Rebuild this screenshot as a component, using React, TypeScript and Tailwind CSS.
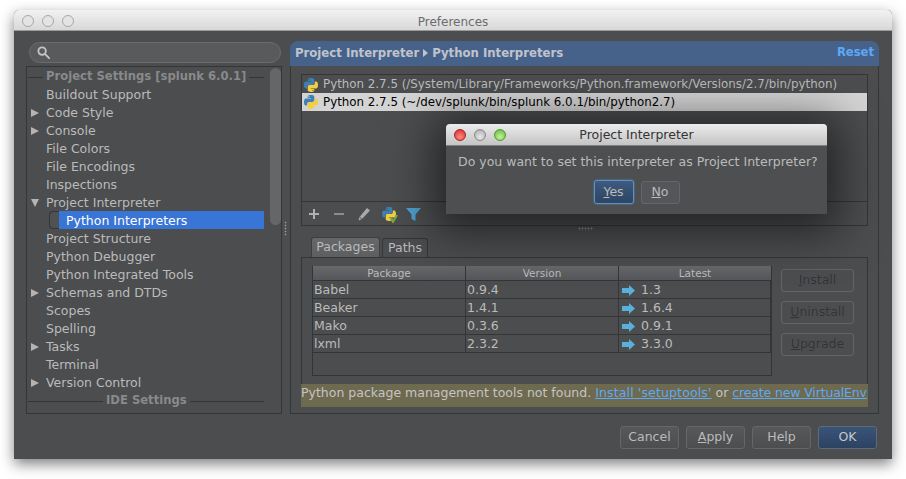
const treeItems: { label: string; arrow?: "right" | "down"; selected?: boolean }[] = [
  { label: "Buildout Support" },
  { label: "Code Style", arrow: "right" },
  { label: "Console", arrow: "right" },
  { label: "File Colors" },
  { label: "File Encodings" },
  { label: "Inspections" },
  { label: "Project Interpreter", arrow: "down" },
  { label: "Python Interpreters", selected: true },
  { label: "Project Structure" },
  { label: "Python Debugger" },
  { label: "Python Integrated Tools" },
  { label: "Schemas and DTDs", arrow: "right" },
  { label: "Scopes" },
  { label: "Spelling" },
  { label: "Tasks", arrow: "right" },
  { label: "Terminal" },
  { label: "Version Control", arrow: "right" },
];

const packages = [
  ["Babel", "0.9.4", "1.3"],
  ["Beaker", "1.4.1", "1.6.4"],
  ["Mako", "0.3.6", "0.9.1"],
  ["lxml", "2.3.2", "3.3.0"],
];

const PythonIcon = ({ className = "" }: { className?: string }) => (
  <svg viewBox="0 0 16 16" className={className}>
    <path
      fill="#3f7fb5"
      d="M7.9 1C4.6 1 4.7 2.5 4.7 2.5V4h3.4v.5H3.2S1 4.2 1 8s2 3.6 2 3.6h1.2V9.9s-.1-2 1.9-2h3.3s1.9 0 1.9-1.8V2.9S11.6 1 7.9 1zM6 2.1a.6.6 0 1 1 0 1.2.6.6 0 0 1 0-1.2z"
    />
    <path
      fill="#f2cf3e"
      d="M8.1 15c3.3 0 3.2-1.5 3.2-1.5V12H7.9v-.5h4.9S15 11.8 15 8s-2-3.6-2-3.6h-1.2v1.7s.1 2-1.9 2H6.6s-1.9 0-1.9 1.8v3.2S4.4 15 8.1 15zm1.9-1.1a.6.6 0 1 1 0-1.2.6.6 0 0 1 0 1.2z"
    />
  </svg>
);

const TrafficLight = ({ className }: { className: string }) => (
  <span className={`block h-3 w-3 rounded-full border ${className}`} />
);

const Grip = ({ className }: { className: string }) => (
  <span
    className={`absolute bg-[radial-gradient(circle,#9a9a9a_40%,transparent_50%)] bg-[length:3px_3px] ${className}`}
  />
);

const SectionHeader = ({ label, left }: { label: string; left: string }) => (
  <div className="flex h-[18px] items-center pl-px pr-[17px] pt-[2px] text-[11.6px] font-bold text-[#888a8c]">
    <span className={`h-px bg-[#333537] ${left}`} />
    <span className="px-[3px] whitespace-nowrap">{label}</span>
    <span className="h-px flex-1 bg-[#333537]" />
  </div>
);

const Sidebar = () => (
  <div className="flex w-[256px] flex-col">
    <div className="ml-[3px] mt-px flex h-[21px] w-[252px] items-center rounded-full border border-[#6a6c6e] bg-[#585a5c] pl-[7px]">
      <svg viewBox="0 0 14 14" className="h-[13px] w-[13px]" fill="none" stroke="#c4c4c4" strokeWidth="2">
        <circle cx="5.5" cy="5.5" r="4" />
        <path d="M8.5 8.5L13 13" strokeLinecap="round" />
      </svg>
    </div>
    <div className="relative mt-[3px] h-[348px] overflow-hidden border border-[#333537]">
      <SectionHeader label="Project Settings [splunk 6.0.1]" left="w-[15px]" />
      {treeItems.map((item) => (
        <div key={item.label} className={`flex h-[18px] items-center pr-[17px] ${item.selected ? "" : "pt-[2px]"}`}>
          <span className="flex w-[19px] shrink-0 justify-center pr-[4px]">
            {item.arrow === "right" && (
              <span className="h-0 w-0 border-y-[4.5px] border-l-[8px] border-y-transparent border-l-[#b4b4b4]" />
            )}
            {item.arrow === "down" && (
              <span className="h-0 w-0 border-x-[4.5px] border-t-[8px] border-x-transparent border-t-[#b4b4b4]" />
            )}
          </span>
          {item.selected ? (
            <>
              <span className="ml-[3px] h-[18px] w-[10px] rounded-l-sm border border-r-0 border-[#333537] bg-[#4f5153]" />
              <span className="flex h-[18px] flex-1 items-center bg-[#3875d7] pl-[7px] pt-[2px] text-white">
                {item.label}
              </span>
            </>
          ) : (
            <span className="whitespace-nowrap">{item.label}</span>
          )}
        </div>
      ))}
      <SectionHeader label="IDE Settings" left="w-[75px] ml-0" />
      <div className="flex h-[18px] items-center pl-[19px] pt-[2px]">Appearance</div>
      {/* scrollbar */}
      <span className="absolute left-[243px] top-px h-[157px] w-[11px] rounded-md bg-[#646668]" />
    </div>
  </div>
);

const ToolbarIcons = () => (
  <div className="flex h-[24px] items-center border-t border-[#333537] pl-[6px]">
    <svg viewBox="0 0 12 12" className="h-3 w-3" fill="none" stroke="#b0b0b0" strokeWidth="2">
      <path d="M6 1v10M1 6h10" />
    </svg>
    <svg viewBox="0 0 12 12" className="ml-[13px] h-3 w-3" fill="none" stroke="#8a8c8e" strokeWidth="2">
      <path d="M1 6h10" />
    </svg>
    <svg viewBox="0 0 14 14" className="ml-[12px] h-[14px] w-[14px]">
      <path d="M10 1l3 2.5L5 12l-3.5 1.5L2.5 10z" fill="#a8aaac" />
      <path d="M2.5 10L5 12" stroke="#5a5c5e" fill="none" />
    </svg>
    <span className="relative ml-[10px] h-4 w-4">
      <PythonIcon className="h-4 w-4" />
      <svg viewBox="0 0 8 8" className="absolute bottom-[-1px] right-[-1px] h-2 w-2" fill="none" stroke="#7fa83a" strokeWidth="2">
        <path d="M1 3l2 4 4-7" />
      </svg>
    </span>
    <svg viewBox="0 0 15 14" className="ml-[9px] h-[14px] w-[15px]" fill="#4d9fd0">
      <path d="M0 1h15L9.5 7.5V14L5.5 12V7.5z" />
    </svg>
  </div>
);

const InterpreterList = () => (
  <div className="flex h-[152px] flex-col border border-[#333537] pt-px text-[11.85px]">
    <div className="flex h-[17px] items-center pl-px text-[#bbbbbb]">
      <PythonIcon className="h-4 w-4" />
      <span className="ml-1 whitespace-nowrap">
        Python 2.7.5 (/System/Library/Frameworks/Python.framework/Versions/2.7/bin/python)
      </span>
    </div>
    <div className="flex h-[18px] items-center bg-[#d4d4d4] pl-px text-black">
      <PythonIcon className="h-4 w-4" />
      <span className="ml-1 whitespace-nowrap pt-[2px]">Python 2.7.5 (~/dev/splunk/bin/splunk 6.0.1/bin/python2.7)</span>
    </div>
    <div className="flex-1" />
    <ToolbarIcons />
  </div>
);

const PackageTable = () => (
  <div className="h-[110px] w-[461px] border border-[#333537] border-t-0">
    <div className="grid h-[15px] grid-cols-[153px_153px_1fr] border-b border-[#333537] bg-gradient-to-b from-[#67696b] to-[#54565a] text-center text-[10.5px] leading-[15px]">
      <span className="border-r border-[#333537]">Package</span>
      <span className="border-r border-[#333537]">Version</span>
      <span>Latest</span>
    </div>
    {packages.map(([name, version, latest]) => (
      <div key={name} className="grid h-[18px] grid-cols-[153px_153px_1fr] border-b border-[#333537] leading-[18px]">
        <span className="border-r border-[#333537] pl-px">{name}</span>
        <span className="border-r border-[#333537] pl-px">{version}</span>
        <span className="flex items-center border-r border-[#333537] pl-[3px]">
          <svg viewBox="0 0 13 11" className="h-[11px] w-[13px]" fill="#5ab0dc">
            <path d="M0 3h7V0l6 5.5L7 11V8H0z" />
          </svg>
          <span className="ml-[6px]">{latest}</span>
        </span>
      </div>
    ))}
  </div>
);

const DisabledButton = ({ first, rest }: { first: string; rest: string }) => (
  <button className="h-[23px] w-[73px] rounded-[3px] border border-[#626466] text-[#303234] [text-shadow:0_0_1px_#5e6062]">
    <span className="underline">{first}</span>
    {rest}
  </button>
);

const FooterButton = ({ children, primary = false }: { children: React.ReactNode; primary?: boolean }) => (
  <button
    className={
      primary
        ? "h-[23px] w-[59px] rounded-[3px] border border-[#5c6a7c] bg-gradient-to-b from-[#3a5478] to-[#2c4262] text-[#c8c8c8]"
        : "h-[23px] w-[59px] rounded-[3px] border border-[#646668] bg-gradient-to-b from-[#56585a] to-[#4c4e50] text-[#bbbbbb]"
    }
  >
    {children}
  </button>
);

const RightPanel = () => (
  <div className="ml-2 flex h-[373px] w-[589px] flex-col">
    <div className="flex h-[25px] items-center justify-between rounded-t-lg bg-[#46628b] px-[5px] text-[11.7px] font-bold text-[#c0c4ca]">
      <span className="flex items-center whitespace-nowrap">
        Project Interpreter
        <span className="mx-[4px] h-0 w-0 border-y-[4.5px] border-l-[5px] border-y-transparent border-l-[#c0c4ca]" />
        Python Interpreters
      </span>
      <span className="pb-px text-[11.6px] text-[#5fa8f5]">Reset</span>
    </div>
    <div className="relative flex flex-1 flex-col border border-t-0 border-[#333537] px-[10px] pt-2">
      <InterpreterList />
      <Grip className="left-[287px] top-[161px] h-[4px] w-[16px]" />
      <div className="ml-[10px] mt-[11px] flex h-[20px] items-end">
        <span className="flex h-[20px] w-[69px] items-center justify-center rounded-t-[3px] border border-b-0 border-[#3c3e40] bg-gradient-to-b from-[#66686a] to-[#5c5e60] pb-px">
          Packages
        </span>
        <span className="ml-[2px] flex h-[19px] w-[46px] items-center justify-center rounded-t-[3px] border border-b-0 border-[#333537]">
          Paths
        </span>
      </div>
      <div className="flex h-[127px] border border-b-0 border-[#333537] pl-[10px] pr-[13px] pt-2">
        <PackageTable />
        <div className="ml-[9px] mt-[3px] flex flex-col gap-[9px]">
          <DisabledButton first="I" rest="nstall" />
          <DisabledButton first="U" rest="ninstall" />
          <DisabledButton first="U" rest="pgrade" />
        </div>
      </div>
      <div className="h-[23px] whitespace-nowrap bg-[#6d6a50] leading-[18px] text-[#c4c4c4]">
        Python package management tools not found.&nbsp;
        <span className="tracking-[0.14px] text-[#5fa8f5] underline">Install 'setuptools'</span>
        &nbsp;or&nbsp;
        <span className="tracking-[-0.14px] text-[#5fa8f5] underline">create new VirtualEnv</span>
      </div>
    </div>
  </div>
);

const ConfirmDialog = () => (
  <div className="absolute left-[432px] top-[93px] h-[90px] w-[381px] rounded-t-[4px] bg-[#4d4f51] shadow-[0_6px_45px_12px_rgba(0,0,0,0.55)]">
    <div className="relative flex h-[22px] items-center justify-center rounded-t-[4px] border-b border-[#808080] bg-gradient-to-b from-[#ececec] to-[#c4c4c4] pt-[2px] text-[#333333]">
      <div className="absolute left-2 top-[5px] flex gap-2">
        <TrafficLight className="border-[#a82020] bg-[radial-gradient(circle_at_50%_70%,#ff8a80,#d62a28)]" />
        <TrafficLight className="border-[#8a8a8a] bg-[radial-gradient(circle_at_50%_70%,#e8e8e8,#a8a8a8)]" />
        <TrafficLight className="border-[#4c9a2a] bg-[radial-gradient(circle_at_50%_70%,#c4f09a,#62b83c)]" />
      </div>
      Project Interpreter
    </div>
    <div className="pl-3 pt-[7px] leading-[18px] whitespace-nowrap">Do you want to set this interpreter as Project Interpreter?</div>
    <div className="mt-[9px] flex items-center justify-center gap-[7px]">
      <button className="h-[24px] w-[40px] rounded-[3px] border border-[#5a93c8] bg-gradient-to-b from-[#3e5a7e] to-[#2e4462] shadow-[0_0_2px_#5a93c8]">
        <span className="underline">Y</span>es
      </button>
      <button className="h-[23px] w-[39px] rounded-[3px] border border-[#646668] bg-[#54565a]">
        <span className="underline">N</span>o
      </button>
    </div>
  </div>
);

export default function App() {
  return (
    <div className="h-[479px] w-[906px] overflow-hidden bg-white pl-[14px] pt-[10px] font-['DejaVu_Sans',sans-serif] text-[12.5px] text-[#bbbbbb]">
      <div className="h-[449px] w-[878px] rounded-t-[5px] bg-[#4b4d4f] shadow-[0_5px_14px_rgba(0,0,0,0.5)]">
        <div className="relative flex h-[21px] items-center justify-center rounded-t-[5px] border-b border-[#9a9a9a] bg-gradient-to-b from-[#f2f2f2] to-[#d8d8d8] pt-[3px] text-[12px] text-[#6c6c6c]">
          <div className="absolute left-2 top-[5px] flex gap-2">
            <TrafficLight className="border-[#a8a8a8] bg-[#e4e4e4]" />
            <TrafficLight className="border-[#a8a8a8] bg-[#e4e4e4]" />
            <TrafficLight className="border-[#a8a8a8] bg-[#e4e4e4]" />
          </div>
          Preferences
        </div>
        <div className="relative">
          <div className="flex pl-3 pt-[10px]">
            <Sidebar />
            <RightPanel />
          </div>
          <Grip className="left-[270px] top-[190px] h-[15px] w-[3px]" />
          <div className="mt-3 flex justify-end gap-[7px] pr-[15px]">
            <FooterButton>Cancel</FooterButton>
            <FooterButton>
              <span className="underline">A</span>pply
            </FooterButton>
            <FooterButton>Help</FooterButton>
            <FooterButton primary>OK</FooterButton>
          </div>
          <ConfirmDialog />
        </div>
      </div>
    </div>
  );
}
